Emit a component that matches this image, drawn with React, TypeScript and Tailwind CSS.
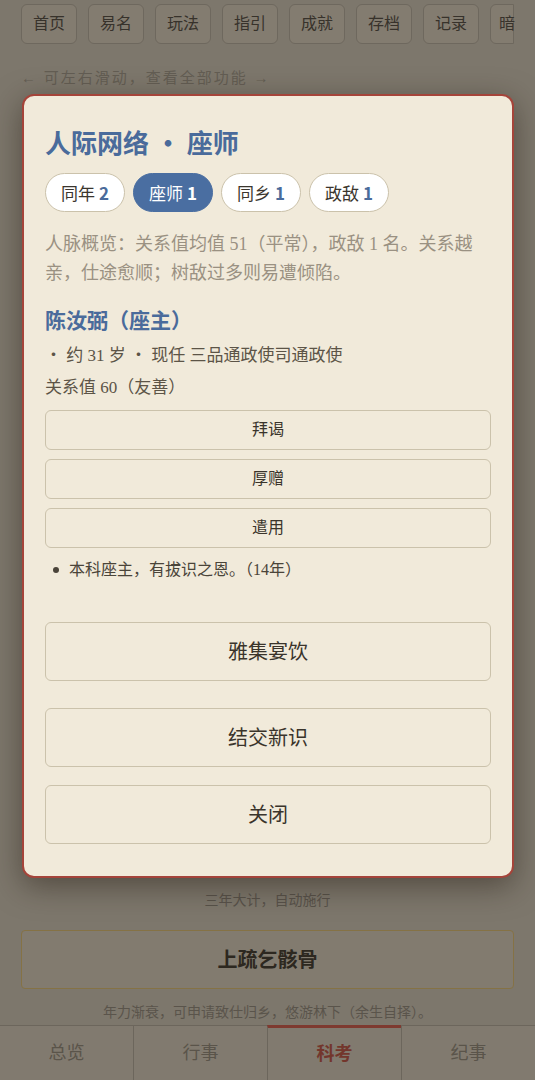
import React from "react";

const serif = { fontFamily: '"Liberation Serif", "Noto Sans CJK SC", serif' };
const sans = { fontFamily: '"Noto Sans CJK SC", "Noto Sans", sans-serif' };

const navItems = ["首页", "易名", "玩法", "指引", "成就", "存档", "记录", "暗"];
const chips = [
  { label: "同年", n: 2 },
  { label: "座师", n: 1, active: true },
  { label: "同乡", n: 1 },
  { label: "政敌", n: 1 },
];
const tabs = ["总览", "行事", "科考", "纪事"];

export default function App() {
  return (
    <div className="relative w-[535px] h-[1080px] overflow-hidden bg-[#7d776c]" style={serif}>
      {/* page behind the dialog */}
      <div className="flex flex-col h-full">
        <div className="flex gap-[11px] pl-[21px] pt-[4px] overflow-hidden">
          {navItems.map((t, i) => (
            <div
              key={t}
              className={`shrink-0 h-[40px] ${i === navItems.length - 1 ? "w-[24px] justify-start pl-[8px] rounded-l-[6px]" : "w-[56px] justify-center rounded-[6px]"} flex items-center border border-[#6e685e] bg-[#837c70] text-[16px] text-[#37322b]`}
            >
              {t}
            </div>
          ))}
        </div>
        <div className="pl-[21px] mt-[23px] text-[15px] tracking-[2px] text-[#635d53]">← 可左右滑动，查看全部功能 →</div>

        <div className="mt-auto flex flex-col">
          <div className="text-center text-[14px] text-[#58524a]">三年大计，自动施行</div>
          <div className="mx-[21px] mt-[19px] h-[59px] flex items-center justify-center rounded-[4px] border-[1.5px] border-[#857245] bg-[#827b6f] text-[20px] font-bold text-[#2d2820]">
            上疏乞骸骨
          </div>
          <div className="mt-[13px] text-center text-[14px] text-[#5a544b]">年力渐衰，可申请致仕归乡，悠游林下（余生自择）。</div>
          <div className="mt-[2px] h-[55px] flex border-t border-[#6c665c] bg-[#817a6f]">
            {tabs.map((t, i) => (
              <div
                key={t}
                className={`flex-1 flex items-center justify-center text-[18px] ${i > 0 ? "border-l border-[#6c665c]" : ""} ${t === "科考" ? "border-t-[3px] border-t-[#7e3a30] text-[#73362c] font-bold -mt-px" : "text-[#5a544a]"}`}
              >
                {t}
              </div>
            ))}
          </div>
        </div>
      </div>

      {/* dialog */}
      <div className="absolute left-[22px] top-[94px] w-[492px] h-[784px] rounded-[12px] border-[2px] border-[#a5443a] bg-[#f1eada] shadow-[0_8px_30px_rgba(40,30,20,0.5)] px-[21px] pt-[26px] flex flex-col">
        <div className="text-[26px] font-bold text-[#4a6b9b] leading-[40px]" style={sans}>
          人际网络 · 座师
        </div>
        <div className="flex gap-[8px] mt-[11px]" style={sans}>
          {chips.map((c) => (
            <div
              key={c.label}
              className={`h-[39px] px-[15px] flex items-center rounded-full text-[17px] ${c.active ? "bg-[#4a6ea1] text-white border border-[#4a6ea1]" : "bg-white text-[#3a352e] border border-[#cbc2ab]"}`}
            >
              {c.label}
              <span className={`ml-[4px] font-bold ${c.active ? "text-white" : "text-[#4a6b9b]"}`}>{c.n}</span>
            </div>
          ))}
        </div>
        <div className="mt-[18px] text-[18px] leading-[29px] text-[#9a9182]">
          人脉概览：关系值均值 51（平常），政敌 1 名。关系越亲，仕途愈顺；树敌过多则易遭倾陷。
        </div>
        <div className="mt-[16px] text-[21px] font-bold text-[#4a6b9b] leading-[30px]" style={sans}>
          陈汝弼（座主）
        </div>
        <div className="mt-[9px] text-[17px] leading-[26px] text-[#5c5447]">・ 约 31 岁 ・ 现任 三品通政使司通政使</div>
        <div className="mt-[6px] text-[17px] leading-[26px] text-[#5c5447]">关系值 60（友善）</div>
        <div className="mt-[9px] flex flex-col gap-[9px]">
          {["拜谒", "厚赠", "遣用"].map((t) => (
            <div key={t} className="h-[40px] flex items-center justify-center rounded-[6px] border border-[#cbc2ab] text-[16px] text-[#3a342b]">
              {t}
            </div>
          ))}
        </div>
        <div className="mt-[9px] flex items-center pl-[8px] text-[16px] leading-[26px] text-[#4a4439]">
          <span className="w-[6px] h-[6px] rounded-full bg-[#4a4439] mr-[10px]" />
          本科座主，有拔识之恩。（14年）
        </div>
        <div className="mt-[39px] h-[59px] flex items-center justify-center rounded-[6px] border border-[#cbc2ab] text-[20px] text-[#3a342b]">
          雅集宴饮
        </div>
        <div className="mt-[27px] h-[59px] flex items-center justify-center rounded-[6px] border border-[#cbc2ab] text-[20px] text-[#3a342b]">
          结交新识
        </div>
        <div className="mt-[18px] h-[59px] flex items-center justify-center rounded-[6px] border border-[#cbc2ab] text-[20px] text-[#3a342b]">
          关闭
        </div>
      </div>
    </div>
  );
}
